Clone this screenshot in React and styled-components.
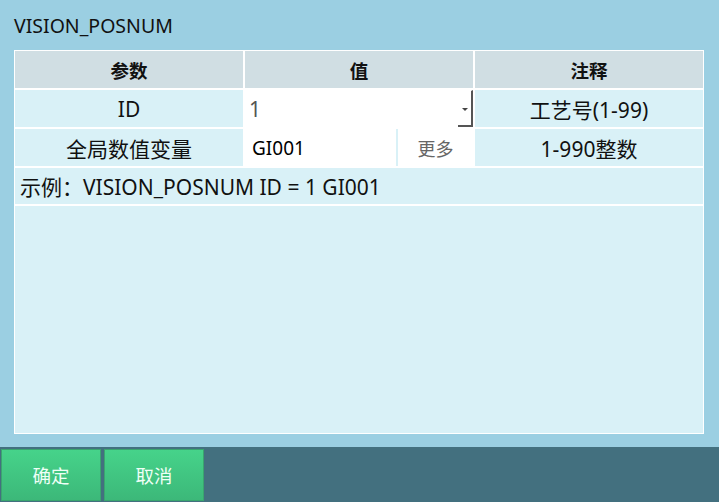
import React from "react";
import styled, { createGlobalStyle } from "styled-components";

const GlobalStyle = createGlobalStyle`
  html, body {
    margin: 0;
    padding: 0;
    height: 100%;
  }
  body {
    background: #9bcfe2;
    font-family: "Noto Sans", "Noto Sans CJK SC", sans-serif;
    color: #111;
  }
  #root {
    height: 100%;
  }
`;

const Page = styled.div`
  height: 100vh;
  display: flex;
  flex-direction: column;
`;

const Main = styled.div`
  flex: 1;
  display: flex;
  flex-direction: column;
  padding: 0 15px 13px 14px;
`;

const Title = styled.div`
  height: 50px;
  line-height: 52px;
  font-size: 19.5px;
`;

const Panel = styled.div`
  flex: 1;
  background: #d9f1f7;
  border: 1px solid #fff;
  display: flex;
  flex-direction: column;
`;

const Grid = styled.div`
  display: grid;
  grid-template-columns: repeat(3, 1fr);
  grid-auto-rows: 37px;
  gap: 2px;
  background: #fff;
  border-bottom: 2px solid #fff;
`;

const Cell = styled.div`
  background: ${(p) => (p.head ? "#d0dee3" : "#d9f1f7")};
  font-size: ${(p) => (p.head ? "18.5px" : "21px")};
  font-weight: ${(p) => (p.head ? 700 : 400)};
  display: flex;
  align-items: center;
  justify-content: center;
  min-width: 0;
`;

const SelectBox = styled.div`
  flex: 1;
  align-self: stretch;
  background: #fff;
  display: flex;
  align-items: center;
  position: relative;
  padding-left: 4px;
  color: #555;
  font-size: 21px;
`;

const DropButton = styled.div`
  position: absolute;
  right: 0;
  top: 0;
  bottom: 0;
  width: 15px;
  border-right: 2px solid #555;
  border-bottom: 2px solid #555;
  border-top: 1px solid #fff;
  box-sizing: border-box;
  display: flex;
  align-items: center;
  justify-content: center;
  &::after {
    content: "";
    border-left: 3px solid transparent;
    border-right: 3px solid transparent;
    border-top: 3px solid #444;
    margin-top: 2px;
  }
`;

const Split = styled.div`
  flex: 1;
  align-self: stretch;
  display: flex;
  gap: 2px;
`;

const TextInput = styled.div`
  flex: 1;
  background: #fff;
  display: flex;
  align-items: center;
  padding-left: 7px;
  font-size: 19px;
  color: #000;
`;

const MoreButton = styled.div`
  width: 75px;
  background: #fff;
  display: flex;
  align-items: center;
  justify-content: center;
  font-size: 18px;
  color: #666;
`;

const Example = styled.div`
  height: 36px;
  display: flex;
  align-items: center;
  padding-left: 5px;
  font-size: 21px;
  border-bottom: 2px solid #fff;
`;

const Footer = styled.div`
  height: 55px;
  background: #43707f;
  display: flex;
  gap: 3px;
  padding: 2px 0 1px 1px;
  box-sizing: border-box;
`;

const GreenButton = styled.div`
  width: 100px;
  box-sizing: border-box;
  border: 1px solid #3aa56f;
  background: linear-gradient(#46d38a, #3cb879);
  color: #eefff6;
  font-size: 18.5px;
  display: flex;
  align-items: center;
  justify-content: center;
`;

export default function App() {
  return (
    <Page>
      <GlobalStyle />
      <Main>
        <Title>VISION_POSNUM</Title>
        <Panel>
          <Grid>
            <Cell head>参数</Cell>
            <Cell head>值</Cell>
            <Cell head>注释</Cell>

            <Cell>ID</Cell>
            <Cell>
              <SelectBox>
                1
                <DropButton />
              </SelectBox>
            </Cell>
            <Cell>工艺号(1-99)</Cell>

            <Cell>全局数值变量</Cell>
            <Cell>
              <Split>
                <TextInput>GI001</TextInput>
                <MoreButton>更多</MoreButton>
              </Split>
            </Cell>
            <Cell>1-990整数</Cell>
          </Grid>
          <Example>示例：VISION_POSNUM ID = 1 GI001</Example>
        </Panel>
      </Main>
      <Footer>
        <GreenButton>确定</GreenButton>
        <GreenButton>取消</GreenButton>
      </Footer>
    </Page>
  );
}
